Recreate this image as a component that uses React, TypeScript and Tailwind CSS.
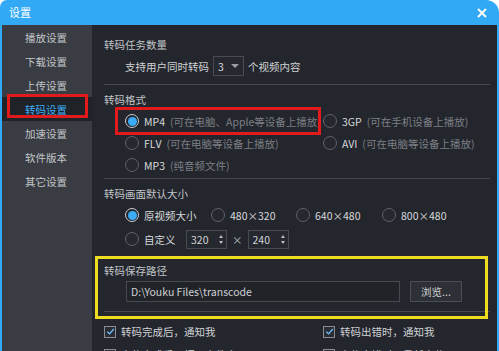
import React from "react";

const menu = ["播放设置", "下载设置", "上传设置", "转码设置", "加速设置", "软件版本", "其它设置"];

function Radio({ checked }: { checked?: boolean }) {
    return checked ? (
        <span className="flex h-[14px] w-[14px] shrink-0 items-center justify-center rounded-full border border-[#c9cdd2] bg-[#23262c]">
            <span className="h-[9px] w-[9px] rounded-full bg-[#3babf7]" />
        </span>
    ) : (
        <span className="h-[14px] w-[14px] shrink-0 rounded-full border border-[#5f6369] bg-[#25282e]" />
    );
}

function Check() {
    return (
        <span className="flex h-[12px] w-[12px] shrink-0 items-center justify-center border border-[#8a8e94] bg-[#2a2d33]">
            <svg viewBox="0 0 10 10" className="h-[9px] w-[9px]">
                <path d="M1.5 5.2 L4 7.6 L8.6 2.2" fill="none" stroke="#6cc4ff" strokeWidth="1.4" />
            </svg>
        </span>
    );
}

function Spin({ value }: { value: string }) {
    return (
        <div className="flex h-[19px] w-[41px] items-center justify-between border border-[#484b51] bg-[#25282e] pl-[4px] pr-[3px]">
            <span className="text-[#d0d2d5]">{value}</span>
            <span className="flex flex-col items-center gap-[3px]">
                <span className="h-0 w-0 border-x-[2.5px] border-b-[3px] border-x-transparent border-b-[#b8bbc0]" />
                <span className="h-0 w-0 border-x-[2.5px] border-t-[3px] border-x-transparent border-t-[#b8bbc0]" />
            </span>
        </div>
    );
}

function Option({ checked, name, hint, className = "" }: { checked?: boolean; name: string; hint?: string; className?: string }) {
    return (
        <div className={`flex items-center gap-[5px] ${className}`}>
            <Radio checked={checked} />
            <span className="text-[#d6d8db]">{name}</span>
            {hint && <span className="text-[#7c7f85]">{hint}</span>}
        </div>
    );
}

export default function App() {
    return (
        <div className="h-[351px] w-[499px] overflow-hidden bg-white font-['Noto_Sans_CJK_SC','Noto_Sans',sans-serif] text-[10.5px] leading-[15px]">
            <div className="flex h-full flex-col rounded-tl-[7px] rounded-tr-[13px] bg-[#32a9f4]">
                {/* Title bar */}
                <div className="flex h-[25px] shrink-0 items-center justify-between pl-[9px] pr-[12px]">
                    <span className="text-[11px] text-white">设置</span>
                    <svg viewBox="0 0 10 10" className="h-[10px] w-[10px]">
                        <path d="M1 1 L9 9 M9 1 L1 9" stroke="white" strokeWidth="2" />
                    </svg>
                </div>

                <div className="mx-[2px] flex flex-1">
                    {/* Sidebar */}
                    <div className="w-[90px] shrink-0 bg-[#393c42]">
                        {menu.map((m) => (
                            <div
                                key={m}
                                className={`relative flex h-[24px] items-center pl-[23px] ${m === "转码设置" ? "bg-[#1f2227] text-[#3caef8]" : "text-[#c3c6ca]"}`}
                            >
                                {m}
                                {m === "转码设置" && (
                                    <span className="pointer-events-none absolute left-[5px] top-[-3px] h-[24px] w-[81px] border-[3px] border-[#e11b1b]" />
                                )}
                            </div>
                        ))}
                    </div>

                    {/* Content */}
                    <div className="flex-1 bg-[#23262c] pl-[12px] pr-[7px] pt-[12px]">
                        <div className="text-[#c2c5c9]">转码任务数量</div>
                        <div className="ml-[21px] mt-[4px] flex h-[20px] items-center">
                            <span className="text-[#d0d2d5]">支持用户同时转码</span>
                            <div className="ml-[4px] flex h-[20px] w-[31px] items-center justify-between border border-[#484b51] bg-[#25282e] pl-[4px] pr-[4px]">
                                <span className="text-[#d6d8db]">3</span>
                                <span className="h-0 w-0 border-x-[4px] border-t-[4px] border-x-transparent border-t-[#9a9da2]" />
                            </div>
                            <span className="ml-[4px] text-[#d0d2d5]">个视频内容</span>
                        </div>
                        <div className="mt-[8px] border-t border-[#45484e]" />

                        <div className="mt-[7px] text-[#c2c5c9]">转码格式</div>
                        <div className="ml-[21px] mt-[3px] grid grid-cols-[198px_1fr]">
                            <div className="relative flex h-[22px] items-center">
                                <Option checked name="MP4" hint="(可在电脑、Apple等设备上播放)" />
                                <span className="pointer-events-none absolute left-[-10px] top-[-3px] h-[28px] w-[206px] border-[3px] border-[#e11b1b]" />
                            </div>
                            <div className="flex h-[22px] items-center">
                                <Option name="3GP" hint="(可在手机设备上播放)" />
                            </div>
                            <div className="flex h-[22px] items-center">
                                <Option name="FLV" hint=" (可在电脑等设备上播放)" />
                            </div>
                            <div className="flex h-[22px] items-center">
                                <Option name="AVI" hint=" (可在电脑等设备上播放)" />
                            </div>
                            <div className="flex h-[22px] items-center">
                                <Option name="MP3" hint="(纯音频文件)" />
                            </div>
                        </div>
                        <div className="mt-[2px] border-t border-[#45484e]" />

                        <div className="mt-[7px] text-[#c2c5c9]">转码画面默认大小</div>
                        <div className="ml-[21px] mt-[2px] flex h-[24px] items-center">
                            <Option checked name="原视频大小" className="w-[86px]" />
                            <Option name="480×320" className="w-[85px]" />
                            <Option name="640×480" className="w-[86px]" />
                            <Option name="800×480" />
                        </div>
                        <div className="ml-[21px] flex h-[24px] items-center">
                            <Option name="自定义" className="w-[61px]" />
                            <Spin value="320" />
                            <span className="mx-[5px] text-[#b8bbc0]">×</span>
                            <Spin value="240" />
                        </div>

                        <div className="relative mt-[12px]">
                            <div className="text-[#c2c5c9]">转码保存路径</div>
                            <div className="ml-[22px] mt-[3px] flex h-[21px] items-center gap-[10px]">
                                <div className="flex h-full w-[274px] items-center border border-[#46494f] bg-[#202328] pl-[4px] text-[#cfd1d4]">
                                    D:\Youku Files\transcode
                                </div>
                                <div className="flex h-full w-[52px] items-center justify-center border border-[#4b4e54] bg-[#2d3036] text-[#d0d2d5]">
                                    浏览...
                                </div>
                            </div>
                            <div className="mt-[9px] border-t border-[#45484e]" />
                            <span className="pointer-events-none absolute left-[-9px] top-[-7px] h-[63px] w-[393px] border-[3px] border-[#eedd1f]" />
                        </div>

                        <div className="mt-[8px] grid grid-cols-[219px_1fr]">
                            <div className="flex h-[23px] items-center gap-[5px] text-[#d0d2d5]">
                                <Check />
                                转码完成后，通知我
                            </div>
                            <div className="flex h-[23px] items-center gap-[5px] text-[#d0d2d5]">
                                <Check />
                                转码出错时，通知我
                            </div>
                            <div className="flex h-[23px] items-center gap-[5px] text-[#d0d2d5]">
                                <Check />
                                上传完成后，打开文件夹
                            </div>
                            <div className="flex h-[23px] items-center gap-[5px] text-[#d0d2d5]">
                                <Check />
                                上传出错时，重新上传
                            </div>
                        </div>
                    </div>
                </div>
            </div>
        </div>
    );
}
